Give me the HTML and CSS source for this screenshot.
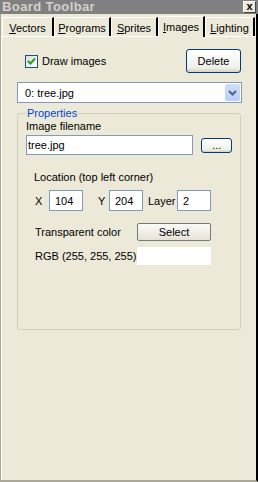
FILE: index.html
```html
<!DOCTYPE html>
<html lang="en">
<head>
  <meta charset="UTF-8" />
  <title>Board Toolbar</title>
  <link rel="stylesheet" href="styles.css">
</head>
<body>
  <div class="window">
    <div class="titlebar">
      <span class="title">Board Toolbar</span>
      <span class="close">x</span>
    </div>

    <div class="frame">
      <!-- tabs -->
      <div class="tabs">
        <div class="tab t-vec"><u>V</u>ectors</div>
        <div class="tab t-prog"><u>P</u>rograms</div>
        <div class="tab t-spr"><u>S</u>prites</div>
        <div class="tab t-img active"><u>I</u>mages</div>
        <div class="tab t-light"><u>L</u>ighting</div>
      </div>

      <div class="panel">
        <div class="top-row">
          <label class="check">
            <span class="box">
              <svg width="9" height="9" viewBox="0 0 9 9"><path d="M1 4 L3.5 6.5 L8 1.5" fill="none" stroke="#21a121" stroke-width="2"/></svg>
            </span>
            Draw images
          </label>
          <button class="btn delete">Delete</button>
        </div>

        <div class="combo">
          <span class="combo-text">0: tree.jpg</span>
          <span class="combo-arrow">
            <svg width="9" height="6" viewBox="0 0 9 6"><path d="M1 1 L4.5 4.5 L8 1" fill="none" stroke="#4d6185" stroke-width="2"/></svg>
          </span>
        </div>

        <fieldset class="group">
          <legend>Properties</legend>
          <div class="label">Image filename</div>
          <div class="file-row">
            <div class="field file">tree.jpg</div>
            <button class="btn browse">...</button>
          </div>

          <div class="label indent loc">Location (top left corner)</div>
          <div class="coords">
            <span class="x-lbl">X</span>
            <div class="field num">104</div>
            <span class="y-lbl">Y</span>
            <div class="field num">204</div>
            <span class="layer-lbl">Layer</span>
            <div class="field num">2</div>
          </div>

          <div class="color-row">
            <span class="row-lbl">Transparent color</span>
            <button class="btn select">Select</button>
          </div>
          <div class="color-row rgb">
            <span class="row-lbl">RGB (255, 255, 255)</span>
            <div class="swatch"></div>
          </div>
        </fieldset>
      </div>
    </div>
  </div>
</body>
</html>
```

FILE: styles.css
```css
/* base */
body {
  margin: 0;
  font-family: "Liberation Sans", Arial, sans-serif;
  font-size: 11px;
  color: #000;
  background: #ece9d8;
}
.window {
  width: 258px;
  height: 482px;
  display: flex;
  flex-direction: column;
  background: #ece9d8;
}

/* title bar */
.titlebar {
  height: 14px;
  background: #808080;
  display: flex;
  align-items: center;
  justify-content: space-between;
  padding: 0 2px 0 2px;
  flex-shrink: 0;
}
.title {
  color: #d4d0c8;
  font-weight: bold;
  font-size: 13px;
  letter-spacing: 0.4px;
  line-height: 14px;
}
.close {
  width: 13px;
  height: 12px;
  background: #ece9d8;
  border: 1px solid;
  border-color: #fff #404040 #404040 #fff;
  box-sizing: border-box;
  font-weight: bold;
  font-size: 11px;
  line-height: 8px;
  text-align: center;
}

.frame {
  flex: 1;
  display: flex;
  flex-direction: column;
  border-left: 1px solid #aca899;
  border-right: 2px solid #000;
  border-bottom: 2px solid #aca899;
  padding-top: 1px;
}

/* tabs */
.tabs {
  display: flex;
  align-items: flex-end;
  padding-left: 1px;
  height: 21px;
}
.tab {
  height: 19px;
  box-sizing: border-box;
  padding-top: 3px;
  border-top: 1px solid #fff;
  border-left: 1px solid #fff;
  border-right: 2px solid #000;
  line-height: 14px;
  font-size: 11px;
  text-align: center;
  white-space: nowrap;
}
.t-vec { width: 52px; }
.t-prog { width: 57px; }
.t-spr { width: 47px; }
.t-img { width: 47px; }
.t-light { width: 50px; }
.tab.active {
  height: 21px;
  padding-top: 3px;
  margin-bottom: -1px;
  background: #ece9d8;
  position: relative;
  z-index: 1;
}

.panel {
  flex: 1;
  border-top: 1px solid #fff;
  border-left: 1px solid #fff;
  padding: 12px 14px 0 15px;
}

/* top row */
.top-row {
  display: flex;
  justify-content: space-between;
  align-items: center;
  padding-left: 8px;
  padding-right: 1px;
}
.check {
  display: flex;
  align-items: center;
  gap: 4px;
  font-size: 11px;
}
.box {
  width: 13px;
  height: 13px;
  box-sizing: border-box;
  border: 1px solid #1c5180;
  background: linear-gradient(135deg, #dcdcd7, #fff);
  display: flex;
  align-items: center;
  justify-content: center;
}
.btn {
  font-family: "Liberation Sans", Arial, sans-serif;
  font-size: 11px;
  color: #000;
  border: 1px solid #003c74;
  border-radius: 3px;
  background: linear-gradient(#fff, #f0f0ea 80%, #d6d0c5);
  padding: 0;
  box-sizing: border-box;
}
.delete {
  width: 55px;
  height: 24px;
}

/* combobox */
.combo {
  margin-top: 9px;
  height: 21px;
  box-sizing: border-box;
  border: 1px solid #7f9db9;
  background: #fff;
  display: flex;
  align-items: center;
  justify-content: space-between;
  padding: 1px 1px 1px 7px;
  font-size: 11px;
}
.combo-arrow {
  width: 15px;
  height: 17px;
  background: linear-gradient(#d2def9, #b9cdf6);
  border-radius: 2px;
  display: flex;
  align-items: center;
  justify-content: center;
}

/* group box */
.group {
  margin: 4px 1px 0 0;
  height: 223px;
  box-sizing: border-box;
  border: 1px solid #d0d0bf;
  border-radius: 3px;
  padding: 0 8px 0 8px;
  min-inline-size: 0;
}
.group legend {
  color: #0046d5;
  font-size: 11px;
  padding: 0 1px;
  margin-left: 0;
}
.label {
  font-size: 11px;
  margin-top: 1px;
}
.indent {
  padding-left: 8px;
}
.loc {
  margin-top: 16px;
}
.file-row {
  display: flex;
  align-items: center;
  gap: 8px;
  margin-top: 3px;
}
.field {
  border: 1px solid #7f9db9;
  background: #fff;
  box-sizing: border-box;
  font-size: 11px;
  padding-left: 3px;
  display: flex;
  align-items: center;
}
.file {
  width: 170px;
  height: 20px;
  padding-left: 1px;
}
.browse {
  width: 31px;
  height: 15px;
  line-height: 10px;
}
.coords {
  display: flex;
  align-items: center;
  margin-top: 7px;
  padding-left: 9px;
  font-size: 11px;
}
.num {
  width: 34px;
  height: 21px;
  padding-left: 5px;
}
.x-lbl {
  width: 14px;
}
.y-lbl {
  margin-left: 15px;
  width: 11px;
}
.layer-lbl {
  margin-left: 5px;
  width: 29px;
}
.color-row {
  display: flex;
  align-items: center;
  margin-top: 12px;
  padding-left: 9px;
  font-size: 11px;
}
.color-row.rgb {
  margin-top: 6px;
}
.row-lbl {
  width: 102px;
  white-space: nowrap;
}
.select {
  width: 74px;
  height: 18px;
  border-color: #7a7a7a;
  border-radius: 2px;
  background: linear-gradient(#fafaf8, #e6e3d6);
}
.swatch {
  width: 74px;
  height: 18px;
  background: #fff;
}
```
